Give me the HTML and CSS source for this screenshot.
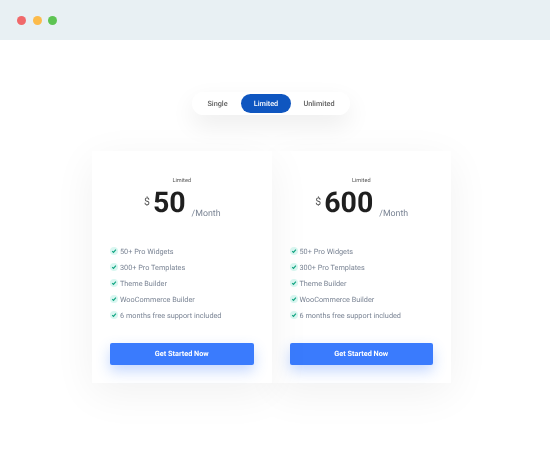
FILE: index.html
```html
<!DOCTYPE html>
<html lang="en">
<head>
    <meta charset="UTF-8">
    <title>Pricing</title>
    <link rel="stylesheet" href="styles.css">
</head>
<body>
    <div class="topbar">
        <span class="dot dot-red"></span>
        <span class="dot dot-yellow"></span>
        <span class="dot dot-green"></span>
    </div>

    <div class="switch-row">
        <div class="switch">
            <span class="switch-item item-single">Single</span>
            <span class="switch-item item-active">Limited</span>
            <span class="switch-item item-unlimited">Unlimited</span>
        </div>
    </div>

    <div class="cards">
        <div class="card">
            <div class="plan">Limited</div>
            <div class="price">
                <span class="currency">$</span>
                <span class="amount">50</span>
                <span class="period">/Month</span>
            </div>
            <ul class="features">
                <li><svg class="check" viewBox="0 0 8 8"><circle cx="4" cy="4" r="4" fill="#d9f7f1"/><path d="M2.2 4.1l1.3 1.3 2.4-2.7" fill="none" stroke="#12a582" stroke-width="1.2"/></svg>50+ Pro Widgets</li>
                <li><svg class="check" viewBox="0 0 8 8"><circle cx="4" cy="4" r="4" fill="#d9f7f1"/><path d="M2.2 4.1l1.3 1.3 2.4-2.7" fill="none" stroke="#12a582" stroke-width="1.2"/></svg>300+ Pro Templates</li>
                <li><svg class="check" viewBox="0 0 8 8"><circle cx="4" cy="4" r="4" fill="#d9f7f1"/><path d="M2.2 4.1l1.3 1.3 2.4-2.7" fill="none" stroke="#12a582" stroke-width="1.2"/></svg>Theme Builder</li>
                <li><svg class="check" viewBox="0 0 8 8"><circle cx="4" cy="4" r="4" fill="#d9f7f1"/><path d="M2.2 4.1l1.3 1.3 2.4-2.7" fill="none" stroke="#12a582" stroke-width="1.2"/></svg>WooCommerce Builder</li>
                <li><svg class="check" viewBox="0 0 8 8"><circle cx="4" cy="4" r="4" fill="#d9f7f1"/><path d="M2.2 4.1l1.3 1.3 2.4-2.7" fill="none" stroke="#12a582" stroke-width="1.2"/></svg>6 months free support included</li>
            </ul>
            <a class="cta">Get Started Now</a>
        </div>
        <div class="card">
            <div class="plan">Limited</div>
            <div class="price">
                <span class="currency">$</span>
                <span class="amount">600</span>
                <span class="period">/Month</span>
            </div>
            <ul class="features">
                <li><svg class="check" viewBox="0 0 8 8"><circle cx="4" cy="4" r="4" fill="#d9f7f1"/><path d="M2.2 4.1l1.3 1.3 2.4-2.7" fill="none" stroke="#12a582" stroke-width="1.2"/></svg>50+ Pro Widgets</li>
                <li><svg class="check" viewBox="0 0 8 8"><circle cx="4" cy="4" r="4" fill="#d9f7f1"/><path d="M2.2 4.1l1.3 1.3 2.4-2.7" fill="none" stroke="#12a582" stroke-width="1.2"/></svg>300+ Pro Templates</li>
                <li><svg class="check" viewBox="0 0 8 8"><circle cx="4" cy="4" r="4" fill="#d9f7f1"/><path d="M2.2 4.1l1.3 1.3 2.4-2.7" fill="none" stroke="#12a582" stroke-width="1.2"/></svg>Theme Builder</li>
                <li><svg class="check" viewBox="0 0 8 8"><circle cx="4" cy="4" r="4" fill="#d9f7f1"/><path d="M2.2 4.1l1.3 1.3 2.4-2.7" fill="none" stroke="#12a582" stroke-width="1.2"/></svg>WooCommerce Builder</li>
                <li><svg class="check" viewBox="0 0 8 8"><circle cx="4" cy="4" r="4" fill="#d9f7f1"/><path d="M2.2 4.1l1.3 1.3 2.4-2.7" fill="none" stroke="#12a582" stroke-width="1.2"/></svg>6 months free support included</li>
            </ul>
            <a class="cta">Get Started Now</a>
        </div>
    </div>
</body>
</html>
```
FILE: styles.css
```css
* {
    box-sizing: border-box;
}
html, body {
    height: 100%;
}
body {
    margin: 0;
    background: #fff;
    font-family: Roboto, "Liberation Sans", sans-serif;
    text-rendering: geometricPrecision;
    overflow: hidden;
}
.topbar {
    height: 40px;
    background: #e8f0f3;
    display: flex;
    align-items: center;
    padding-left: 17px;
    gap: 6px;
}
.dot {
    width: 9px;
    height: 9px;
    border-radius: 50%;
}
.dot-red { background: #f0696a; }
.dot-yellow { background: #fcbb4a; margin-left: 1px; }
.dot-green { background: #5dc452; }

.switch-row {
    display: flex;
    justify-content: center;
    margin-top: 52px;
    padding-right: 8px;
    will-change: transform;
}
.switch {
    width: 158px;
    height: 23px;
    border-radius: 12px;
    background: #fff;
    box-shadow: 0 10px 25px rgba(0, 0, 0, 0.08);
    display: flex;
    align-items: center;
    font-size: 7.3px;
    font-weight: 500;
    color: #5c5c5c;
}
.switch-item {
    text-align: center;
}
.item-single { width: 49px; padding-left: 2px; }
.item-active {
    width: 50px;
    height: 19px;
    line-height: 19px;
    border-radius: 10px;
    background: #0f56c0;
    color: #fff;
}
.item-unlimited { width: 56px; }

.cards {
    display: flex;
    justify-content: center;
    margin-top: 36px;
    padding-right: 7px;
    will-change: transform;
}
.card {
    width: 179.5px;
    height: 232px;
    background: #fff;
    padding: 27px 18px 0;
    box-shadow: 0 10px 40px rgba(0, 0, 0, 0.06);
}
/* first card throws its shadow onto the second */
.card:first-child {
    position: relative;
    z-index: 1;
}
.plan {
    text-align: center;
    font-size: 5.6px;
    line-height: 7px;
    color: #555;
}
.price {
    display: flex;
    justify-content: center;
    align-items: flex-start;
    height: 36px;
    padding-left: 1px;
}
.currency {
    font-size: 10.5px;
    line-height: 11px;
    color: #555;
    margin: 11px 3px 0 0;
}
.amount {
    font-size: 28.5px;
    line-height: 29px;
    font-weight: 700;
    color: #1f1f1f;
    margin: 3px 6px 0 0;
}
.period {
    font-size: 8.8px;
    line-height: 9px;
    color: #7a8494;
    margin-top: 24.5px;
}
.features {
    list-style: none;
    margin: 22px 0 0;
    padding: 0;
    font-size: 7.3px;
    color: #7a8494;
}
.features li {
    height: 16px;
    display: flex;
    align-items: center;
    gap: 2px;
}
.check {
    width: 8px;
    height: 8px;
    flex: none;
}
.cta {
    display: block;
    height: 22px;
    margin-top: 20px;
    border-radius: 2px;
    background: #3a7bfd;
    box-shadow: 0 6px 14px rgba(58, 123, 253, 0.3);
    color: #fff;
    font-size: 7.3px;
    font-weight: 700;
    line-height: 22px;
    text-align: center;
}
```
